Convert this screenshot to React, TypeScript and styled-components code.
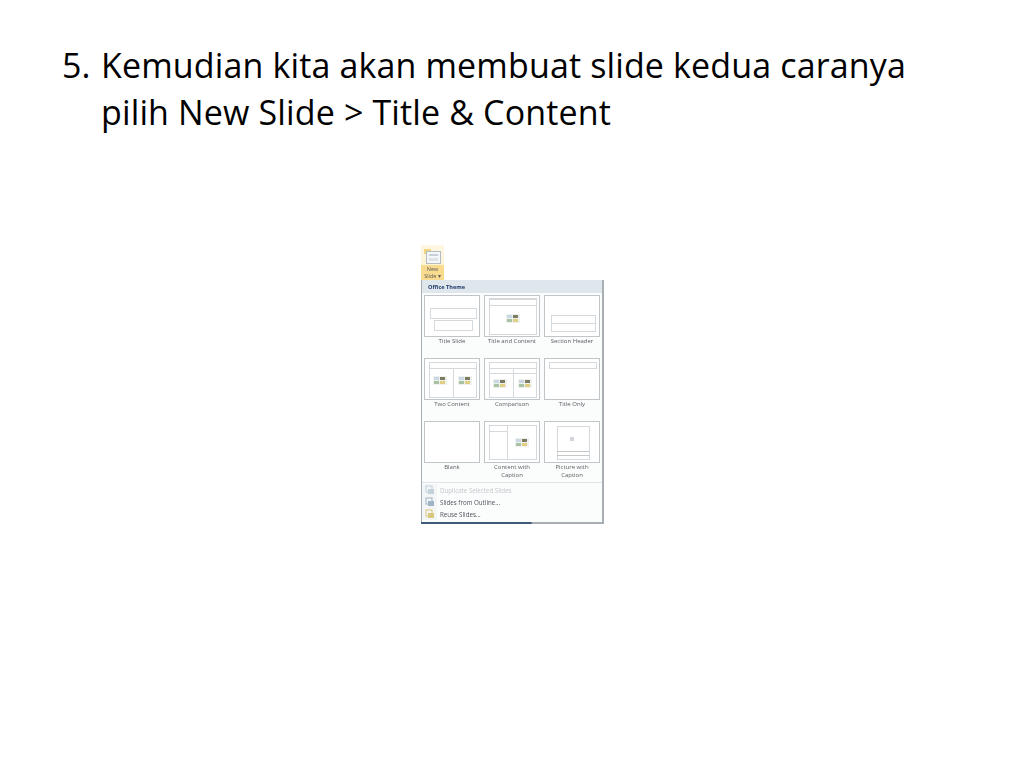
import styled, { createGlobalStyle } from "styled-components";

const GlobalStyle = createGlobalStyle`
  html, body {
    margin: 0;
    padding: 0;
    background: #ffffff;
  }
`;

type LayoutName =
  | "title"
  | "titleContent"
  | "section"
  | "twoContent"
  | "comparison"
  | "titleOnly"
  | "blank"
  | "contentCaption"
  | "pictureCaption";

const layouts: { name: LayoutName; label: string }[] = [
  { name: "title", label: "Title Slide" },
  { name: "titleContent", label: "Title and Content" },
  { name: "section", label: "Section Header" },
  { name: "twoContent", label: "Two Content" },
  { name: "comparison", label: "Comparison" },
  { name: "titleOnly", label: "Title Only" },
  { name: "blank", label: "Blank" },
  { name: "contentCaption", label: "Content with Caption" },
  { name: "pictureCaption", label: "Picture with Caption" },
];

const menuItems = [
  { id: "duplicate", label: "Duplicate Selected Slides", disabled: true, color: "#c4d2dc" },
  { id: "outline", label: "Slides from Outline...", disabled: false, color: "#9fb4c4" },
  { id: "reuse", label: "Reuse Slides...", disabled: false, color: "#d9c77c" },
];

// Little picture placeholder that sits in the content boxes
const ContentIcon = ({ x, y }: { x: number; y: number }) => (
  <g transform={`translate(${x} ${y})`}>
    <rect width="14" height="9" fill="#eef1ee" />
    <rect x="1" y="1" width="5" height="3" fill="#c9d8e2" />
    <rect x="7" y="1" width="5" height="3" fill="#7d7a62" />
    <rect x="1" y="5" width="5" height="3" fill="#a9c2a4" />
    <rect x="7" y="5" width="5" height="3" fill="#e0cf83" />
  </g>
);

const Box = ({ x, y, w, h }: { x: number; y: number; w: number; h: number }) => (
  <rect x={x + 0.5} y={y + 0.5} width={w} height={h} fill="none" stroke="#d6d9db" />
);

const LayoutDrawing = ({ name }: { name: LayoutName }) => {
  switch (name) {
    case "title":
      return (
        <>
          <Box x={5} y={12} w={46} h={10} />
          <Box x={9} y={24} w={38} h={10} />
        </>
      );
    case "titleContent":
      return (
        <>
          <Box x={4} y={2} w={47} h={36} />
          <Box x={4} y={3} w={47} h={6} />
          <ContentIcon x={21} y={18} />
        </>
      );
    case "section":
      return (
        <>
          <Box x={6} y={19} w={44} h={8} />
          <Box x={6} y={27} w={44} h={8} />
        </>
      );
    case "twoContent":
      return (
        <>
          <Box x={4} y={3} w={47} h={35} />
          <Box x={4} y={3} w={47} h={6} />
          <Box x={4} y={9} w={24} h={29} />
          <ContentIcon x={8} y={17} />
          <ContentIcon x={33} y={17} />
        </>
      );
    case "comparison":
      return (
        <>
          <Box x={4} y={3} w={47} h={35} />
          <Box x={4} y={3} w={47} h={6} />
          <Box x={4} y={9} w={24} h={5} />
          <Box x={28} y={9} w={23} h={5} />
          <Box x={4} y={14} w={24} h={24} />
          <ContentIcon x={8} y={20} />
          <ContentIcon x={33} y={20} />
        </>
      );
    case "titleOnly":
      return <Box x={4} y={3} w={47} h={6} />;
    case "contentCaption":
      return (
        <>
          <Box x={4} y={3} w={47} h={34} />
          <Box x={4} y={3} w={18} h={34} />
          <Box x={4} y={3} w={18} h={6} />
          <ContentIcon x={30} y={16} />
        </>
      );
    case "pictureCaption":
      return (
        <>
          <Box x={12} y={4} w={32} h={33} />
          <line x1="12" y1="29.5" x2="44" y2="29.5" stroke="#c4c8ca" />
          <line x1="12" y1="33.5" x2="44" y2="33.5" stroke="#c4c8ca" />
          <rect x="25" y="15" width="4" height="4" fill="#d2d6da" />
        </>
      );
    default:
      return null;
  }
};

const MenuIcon = ({ color }: { color: string }) => (
  <svg width="10" height="10" viewBox="0 0 10 10">
    <rect x="1" y="1" width="6" height="6" fill="#f3f6f8" stroke={color} />
    <rect x="3" y="4" width="6" height="5" fill={color} />
  </svg>
);

const App = () => {
  return (
    <>
      <GlobalStyle />
      <Slide>
        <Heading>
          <Marker>5.</Marker>
          <HeadingText>
            Kemudian kita akan membuat slide kedua caranya pilih New Slide &gt; Title &amp; Content
          </HeadingText>
        </Heading>

        <Capture>
          <RibbonButton>
            <RibbonIconArea>
              <svg width="18" height="16" viewBox="0 0 18 16">
                <rect x="0" y="0" width="7" height="5" fill="#f1d680" />
                <rect x="2.5" y="2.5" width="14" height="12" fill="#f4f6f7" stroke="#b3bcc2" />
                <rect x="5" y="5" width="9" height="2" fill="#c7d0d6" />
                <rect x="5" y="9" width="9" height="3" fill="#dce2e6" />
              </svg>
            </RibbonIconArea>
            <RibbonLabel>
              New
              <br />
              Slide ▾
            </RibbonLabel>
          </RibbonButton>

          <Menu>
            <MenuHeader>Office Theme</MenuHeader>
            <Gallery>
              {layouts.map((layout) => (
                <LayoutCell key={layout.name}>
                  <Thumb>
                    <svg width="54" height="40" viewBox="0 0 54 40">
                      <LayoutDrawing name={layout.name} />
                    </svg>
                  </Thumb>
                  <LayoutLabel>{layout.label}</LayoutLabel>
                </LayoutCell>
              ))}
            </Gallery>
            <MenuList>
              {menuItems.map((item) => (
                <MenuItem key={item.id} $disabled={item.disabled}>
                  <MenuItemIcon>
                    <MenuIcon color={item.color} />
                  </MenuItemIcon>
                  {item.label}
                </MenuItem>
              ))}
            </MenuList>
            <BottomEdge />
          </Menu>
        </Capture>
      </Slide>
    </>
  );
};
export default App;

const Slide = styled.main`
  width: 1024px;
  height: 768px;
  overflow: hidden;
  background: #ffffff;
  padding: 42px 0 0 62px;
  box-sizing: border-box;
`;

const Heading = styled.h1`
  display: flex;
  width: 880px;
  margin: 0;
  font-family: "Open Sans", Lato, sans-serif;
  font-size: 34px;
  line-height: 47px;
  font-weight: 400;
  letter-spacing: 0.14px;
  color: #000000;
`;

const Marker = styled.span`
  flex: 0 0 39px;
`;

const HeadingText = styled.span`
  flex: 1;
`;

const Capture = styled.figure`
  width: 184px;
  margin: 109px 0 0 359px;
  filter: blur(0.6px);
  font-family: "Open Sans", Arial, sans-serif;
`;

const RibbonButton = styled.div`
  width: 23px;
  height: 35px;
  display: flex;
  flex-direction: column;
  background: linear-gradient(#fdf7e3, #fdf3cf);
`;

const RibbonIconArea = styled.div`
  height: 20px;
  display: flex;
  justify-content: center;
  align-items: flex-end;
`;

const RibbonLabel = styled.div`
  flex: 1;
  padding-top: 1px;
  background: #f8db8f;
  color: #5d5a55;
  font-size: 5.5px;
  line-height: 7px;
  text-align: center;
`;

const Menu = styled.div`
  width: 183px;
  height: 244px;
  box-sizing: border-box;
  display: flex;
  flex-direction: column;
  background: #fbfcfc;
  border-left: 1px solid #a6afb6;
  border-right: 2px solid #a9b0b5;
`;

const MenuHeader = styled.div`
  height: 13px;
  flex: none;
  padding-left: 6px;
  background: #dfe7ed;
  color: #1f3a68;
  font-size: 5.6px;
  font-weight: 700;
  line-height: 14px;
`;

const Gallery = styled.div`
  flex: none;
  height: 190px;
  display: grid;
  grid-template-columns: repeat(3, 56px);
  grid-auto-rows: 63px;
  column-gap: 4px;
  padding: 2px 0 0 2px;
  box-sizing: border-box;
  border-bottom: 1px solid #e2e5e7;
`;

const LayoutCell = styled.div`
  display: flex;
  flex-direction: column;
  align-items: center;
`;

const Thumb = styled.div`
  width: 56px;
  height: 42px;
  flex: none;
  box-sizing: border-box;
  border: 1px solid #c0c5c9;
  background: #ffffff;
`;

const LayoutLabel = styled.div`
  width: 54px;
  color: #5b6066;
  font-size: 6px;
  line-height: 8px;
  text-align: center;
`;

const MenuList = styled.div`
  flex: 1;
  display: flex;
  flex-direction: column;
  padding-top: 1px;
`;

const MenuItem = styled.div<{ $disabled: boolean }>`
  height: 12px;
  display: flex;
  align-items: center;
  color: ${({ $disabled }) => ($disabled ? "#c3c8cc" : "#4d545b")};
  font-size: 6.2px;
`;

const MenuItemIcon = styled.span`
  width: 15px;
  height: 12px;
  flex: none;
  margin-right: 3px;
  display: flex;
  align-items: center;
  justify-content: center;
  background: #f3f5f7;
`;

const BottomEdge = styled.div`
  height: 2px;
  flex: none;
  margin-left: -1px;
  margin-right: -2px;
  background: linear-gradient(90deg, #3d5a78 0, #3d5a78 60%, #a9b0b5 61%, #a9b0b5 100%);
`;
